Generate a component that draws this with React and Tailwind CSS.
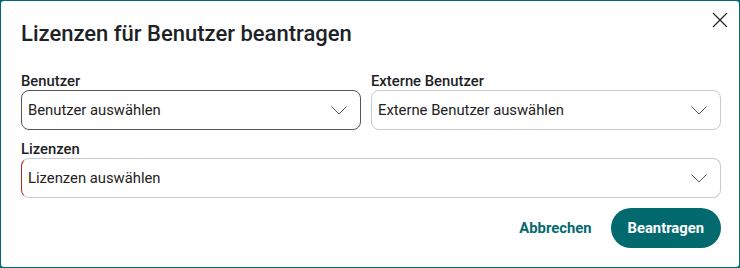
import React from "react";

function Chevron() {
  return (
    <svg width="16" height="9" viewBox="0 0 16 9" fill="none" className="shrink-0">
      <path d="M0.5 0.5 L8 8 L15.5 0.5" stroke="#555" strokeWidth="1" />
    </svg>
  );
}

function Select({ text, className }) {
  return (
    <div className={"flex h-[40px] items-center justify-between rounded-[8px] bg-white pl-[6px] pr-[13px] " + className}>
      <span className="text-[14.8px] text-[#222]">{text}</span>
      <Chevron />
    </div>
  );
}

export default function App() {
  return (
    <div className="h-[268px] w-[740px] bg-[#02696f] p-px" style={{ fontFamily: "Roboto, 'Liberation Sans', sans-serif" }}>
      <div className="relative flex h-full flex-col rounded-[3px] bg-white pl-[20px] pr-[18px] pt-[20px]">
        <button className="absolute right-[11px] top-[11px]">
          <svg width="16" height="16" viewBox="0 0 16 16" fill="none">
            <path d="M1 1 L15 15 M15 1 L1 15" stroke="#222" strokeWidth="1.2" />
          </svg>
        </button>
        <h1 className="text-[22px] font-medium leading-[26px] text-[#1d2226]">Lizenzen für Benutzer beantragen</h1>
        <div className="mt-[26px] flex gap-[10px]">
          <div className="flex w-[340px] flex-col">
            <label className="text-[14.8px] font-medium leading-[17px] text-[#1d2226]">Benutzer</label>
            <Select text="Benutzer auswählen" className="border border-[#555]" />
          </div>
          <div className="flex flex-1 flex-col">
            <label className="text-[14.8px] font-medium leading-[17px] text-[#1d2226]">Externe Benutzer</label>
            <Select text="Externe Benutzer auswählen" className="border border-[#c8cbce]" />
          </div>
        </div>
        <div className="mt-[11px] flex flex-col">
          <label className="text-[14.8px] font-medium leading-[17px] text-[#1d2226]">Lizenzen</label>
          <Select text="Lizenzen auswählen" className="border border-[#c8cbce] border-l-[#b3262c]" />
        </div>
        <div className="mt-[10px] flex items-center justify-end gap-[19px]">
          <button className="text-[14.8px] font-bold text-[#02696f]">Abbrechen</button>
          <button className="h-[40px] rounded-full bg-[#02696f] px-[17px] text-[14.8px] font-bold text-white">Beantragen</button>
        </div>
      </div>
    </div>
  );
}
